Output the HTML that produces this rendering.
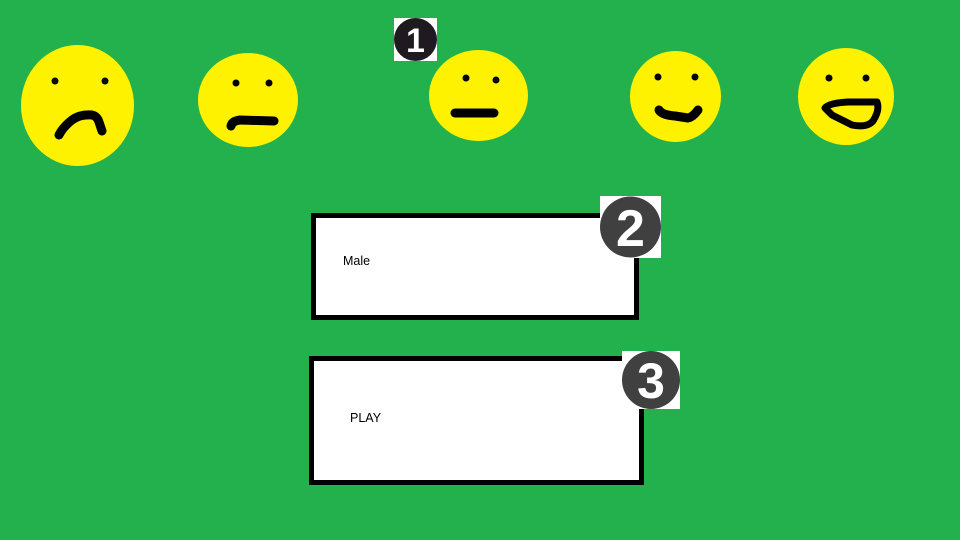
<!DOCTYPE html>
<html><head><style>
html,body{margin:0;padding:0}
body{width:960px;height:540px;background:#22b14c;position:relative;overflow:hidden;font-family:"Liberation Sans",sans-serif}
.box{position:absolute;background:#fff;border:5px solid #000;box-sizing:border-box}
.t{position:absolute;font-size:12.5px;color:#000;line-height:14px}
svg{position:absolute;left:0;top:0}
</style></head><body>
<div class="box" style="left:311px;top:213px;width:328px;height:107px"></div>
<div class="t" style="left:343px;top:254px">Male</div>
<div class="box" style="left:309px;top:356px;width:335px;height:129px"></div>
<div class="t" style="left:350px;top:411px">PLAY</div>
<svg width="960" height="540">
<g fill="#fff200">
<ellipse cx="77.5" cy="105.5" rx="56.5" ry="60.5"/>
<ellipse cx="248" cy="100" rx="50" ry="47"/>
<ellipse cx="478.5" cy="95.5" rx="49.5" ry="45.5"/>
<ellipse cx="675.5" cy="96.5" rx="45.5" ry="45.5"/>
<ellipse cx="846" cy="96.5" rx="48" ry="48.5"/>
</g>
<g fill="#000">
<circle cx="55" cy="81" r="3.5"/><circle cx="105" cy="81" r="3.5"/>
<circle cx="236" cy="83" r="3.5"/><circle cx="269" cy="83" r="3.5"/>
<circle cx="466" cy="78" r="3.5"/><circle cx="496" cy="80" r="3.5"/>
<circle cx="658" cy="77" r="3.5"/><circle cx="695" cy="77" r="3.5"/>
<circle cx="829" cy="78" r="3.5"/><circle cx="866" cy="78" r="3.5"/>
</g>
<g fill="none" stroke="#000" stroke-width="9" stroke-linecap="round" stroke-linejoin="round">
<path d="M59,135 Q63,127 72,120 Q80,114 92,115 Q97,116 99,122 L102,131"/>
<path d="M231,126 Q232,121 240,120 L274,121"/>
<path d="M455,113 L494,113"/>
<path d="M659,110 Q662,115 675,116 L688,118 Q693,117 698,110"/>
</g>
<path d="M825,108 Q829,103 848,102 L877,102 Q880,110 873,121 Q867,128 852,125 L832,115 Z" fill="none" stroke="#000" stroke-width="7" stroke-linejoin="round"/>
<rect x="394" y="18" width="43" height="43" fill="#fff"/>
<circle cx="415.5" cy="39.5" r="21.5" fill="#1e1a1f"/>
<text x="415.5" y="52" text-anchor="middle" fill="#fff" font-family="Liberation Sans" font-weight="bold" font-size="34">1</text>
<rect x="600" y="196" width="61" height="62" fill="#fff"/>
<circle cx="630.5" cy="227" r="30.5" fill="#404040"/>
<text x="630.5" y="246" text-anchor="middle" fill="#fff" font-family="Liberation Sans" font-weight="bold" font-size="52">2</text>
<rect x="622" y="351" width="58" height="58" fill="#fff"/>
<circle cx="651" cy="380" r="29" fill="#404040"/>
<text x="651" y="398" text-anchor="middle" fill="#fff" font-family="Liberation Sans" font-weight="bold" font-size="50">3</text>
</svg>
</body></html>
